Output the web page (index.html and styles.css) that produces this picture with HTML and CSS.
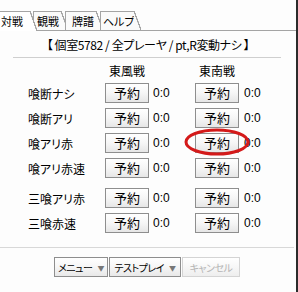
FILE: index.html
```html
<!DOCTYPE html>
<html lang="ja">
<head>
  <meta charset="UTF-8">
  <title>対戦</title>
  <link rel="stylesheet" href="styles.css">
</head>
<body>
  <div class="window">
    <div class="tabs">
      <div class="tab tab-active t1">対戦</div>
      <div class="tab t2">観戦</div>
      <div class="tab t3">牌譜</div>
      <div class="tab t4">ヘルプ</div>
    </div>

    <div class="panel">
      <div class="room">【 個室5782 / 全プレーヤ / pt,R変動ナシ 】</div>
      <div class="rule"></div>

      <div class="table">
        <div></div>
        <div class="col-head">東風戦</div>
        <div></div>
        <div class="col-head">東南戦</div>
        <div></div>

        <div class="label">喰断ナシ</div>
        <button class="btn">予約</button><span class="score">0:0</span>
        <button class="btn">予約</button><span class="score score-b">0:0</span>

        <div class="label">喰断アリ</div>
        <button class="btn">予約</button><span class="score">0:0</span>
        <button class="btn">予約</button><span class="score score-b">0:0</span>

        <div class="label">喰アリ赤</div>
        <button class="btn">予約</button><span class="score">0:0</span>
        <button class="btn">予約</button><span class="score score-b">0:0</span>

        <div class="label">喰アリ赤速</div>
        <button class="btn">予約</button><span class="score">0:0</span>
        <button class="btn">予約</button><span class="score score-b">0:0</span>

        <div class="spacer"></div>

        <div class="label">三喰アリ赤</div>
        <button class="btn">予約</button><span class="score">0:0</span>
        <button class="btn">予約</button><span class="score score-b">0:0</span>

        <div class="label">三喰赤速</div>
        <button class="btn">予約</button><span class="score">0:0</span>
        <button class="btn">予約</button><span class="score score-b">0:0</span>
      </div>

      <div class="rule rule-full"></div>

      <div class="actions">
        <button class="btn-small w-menu">メニュー<span class="arrow">▼</span></button>
        <button class="btn-small w-test">テストプレイ<span class="arrow">▼</span></button>
        <button class="btn-small w-cancel" disabled>キャンセル</button>
      </div>
    </div>

    <!-- annotation circle -->
    <svg class="mark" width="68" height="30" viewBox="0 0 68 30">
      <ellipse cx="33" cy="14" rx="31" ry="12" fill="none" stroke="#d41a1a" stroke-width="3"/>
    </svg>
  </div>
</body>
</html>
```

FILE: styles.css
```css
* {
  margin: 0;
  padding: 0;
  box-sizing: border-box;
}

body {
  font-family: 'Noto Sans CJK JP', sans-serif;
  font-feature-settings: "palt";
  font-size: 12px;
  color: #000;
  background: #fdfdfd;
}

.window {
  position: relative;
  width: 298px;
  height: 292px;
  border-right: 2px solid #2b2b2b;
  background: #fdfdfd;
  overflow: hidden;
}

/* tabs */
.tabs {
  height: 30px;
  display: flex;
  align-items: flex-end;
}

.tab {
  position: relative;
  height: 19px;
  line-height: 18px;
  font-size: 11px;
  border-top: 1px solid #a4a4a4;
  border-left: 1px solid #a4a4a4;
  background: #fafafa;
  white-space: nowrap;
}

.tab::after {
  content: "";
  position: absolute;
  top: -1px;
  right: -7px;
  width: 7px;
  height: 19px;
  background: linear-gradient(to top right, #fafafa calc(50% - 0.8px), #a4a4a4 calc(50% - 0.5px), #a4a4a4 calc(50% + 0.5px), transparent calc(50% + 0.8px));
}

.tab-active {
  z-index: 2;
  height: 20px;
  margin-bottom: -1px;
  background: #fff;
  border-left: none;
}

.tab-active::after {
  height: 20px;
  background: linear-gradient(to top right, #fff calc(50% - 0.8px), #a4a4a4 calc(50% - 0.5px), #a4a4a4 calc(50% + 0.5px), transparent calc(50% + 0.8px));
}

.t1 { width: 30px; padding-left: 1px; }
.t2 { width: 28px; margin-left: 3px; padding-left: 3px; }
.t3 { width: 31px; margin-left: 4px; padding-left: 6px; }
.t4 { width: 34px; margin-left: 4px; padding-left: 2px; }

/* panel */
.panel {
  border-top: 1px solid #a4a4a4;
}

.room {
  padding: 7px 0 5px;
  line-height: 14px;
  text-align: center;
  letter-spacing: -0.4px;
}

.rule {
  height: 1px;
  margin: 0 15px 0 13px;
  background: #cfcfcf;
}

.rule-full {
  margin: 14px 2px 0 0;
  background: #d8d8d8;
}

.table {
  display: grid;
  grid-template-columns: 77px 44px 46px 44px auto;
  grid-template-rows: 14px repeat(4, 20px) 0 repeat(2, 20px);
  row-gap: 5px;
  align-items: center;
  margin-top: 6px;
  padding-left: 28px;
}

.col-head {
  text-align: center;
  line-height: 14px;
  white-space: nowrap;
  margin: 0 -10px;
}

.spacer {
  grid-column: 1 / -1;
  height: 0;
}

.label {
  white-space: nowrap;
}

.btn {
  height: 20px;
  width: 44px;
  font-family: inherit;
  font-feature-settings: "palt";
  font-size: 13px;
  line-height: 18px;
  color: #000;
  border: 1px solid #8e8e8e;
  border-radius: 0;
  background: linear-gradient(#ffffff, #f6f6f6 50%, #e6e6e6);
}

.score {
  font-family: 'Liberation Sans', sans-serif;
  font-size: 12px;
  padding-left: 4px;
}

.score-b {
  padding-left: 5px;
}

/* bottom buttons */
.actions {
  display: flex;
  justify-content: center;
  gap: 1px;
  margin-top: 9px;
  padding-right: 2px;
}

.btn-small {
  height: 20px;
  padding: 0;
  font-family: inherit;
  font-feature-settings: "palt";
  font-size: 10px;
  letter-spacing: -0.5px;
  color: #000;
  border: 1px solid #8e8e8e;
  border-radius: 0;
  background: linear-gradient(#ffffff, #f6f6f6 50%, #e8e8e8);
  white-space: nowrap;
}

.btn-small[disabled] {
  color: #b4b4b4;
  border-color: #d4d4d4;
  background: linear-gradient(#ffffff, #f7f7f7 50%, #eeeeee);
}

.arrow {
  font-size: 7px;
  color: #777;
  margin-left: 5px;
  vertical-align: 1px;
}

.w-menu { width: 54px; }
.w-test { width: 72px; }
.w-cancel { width: 58px; }

/* red annotation */
.mark {
  position: absolute;
  left: 184px;
  top: 128px;
}
```
